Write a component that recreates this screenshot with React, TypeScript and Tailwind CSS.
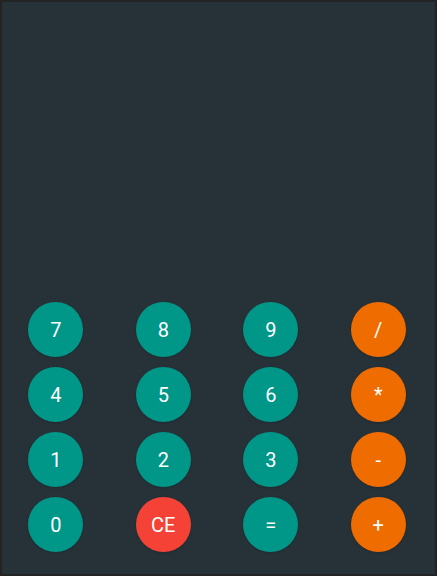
const keys: { label: string; kind: 'num' | 'op' | 'clear' }[] = [
  { label: '7', kind: 'num' },
  { label: '8', kind: 'num' },
  { label: '9', kind: 'num' },
  { label: '/', kind: 'op' },
  { label: '4', kind: 'num' },
  { label: '5', kind: 'num' },
  { label: '6', kind: 'num' },
  { label: '*', kind: 'op' },
  { label: '1', kind: 'num' },
  { label: '2', kind: 'num' },
  { label: '3', kind: 'num' },
  { label: '-', kind: 'op' },
  { label: '0', kind: 'num' },
  { label: 'CE', kind: 'clear' },
  { label: '=', kind: 'num' },
  { label: '+', kind: 'op' },
];

const colors = {
  num: 'bg-[#009688]',
  op: 'bg-[#ef6c00]',
  clear: 'bg-[#f44336]',
};

export default function App() {
  return (
    <div
      className="w-[437px] h-[576px] flex flex-col bg-[#263238] border-2 border-[#232323]"
      style={{ fontFamily: 'Roboto, "Liberation Sans", sans-serif' }}
    >
      {/* display */}
      <div className="flex-1" />
      <div className="grid grid-cols-4 gap-y-[10px] pr-[3px] pb-[22px]">
        {keys.map((k) => (
          <div key={k.label} className="flex justify-center">
            <button
              className={`w-[55px] h-[55px] rounded-full flex items-center justify-center text-white text-[20px] shadow-sm ${colors[k.kind]}`}
            >
              {k.label}
            </button>
          </div>
        ))}
      </div>
    </div>
  );
}
